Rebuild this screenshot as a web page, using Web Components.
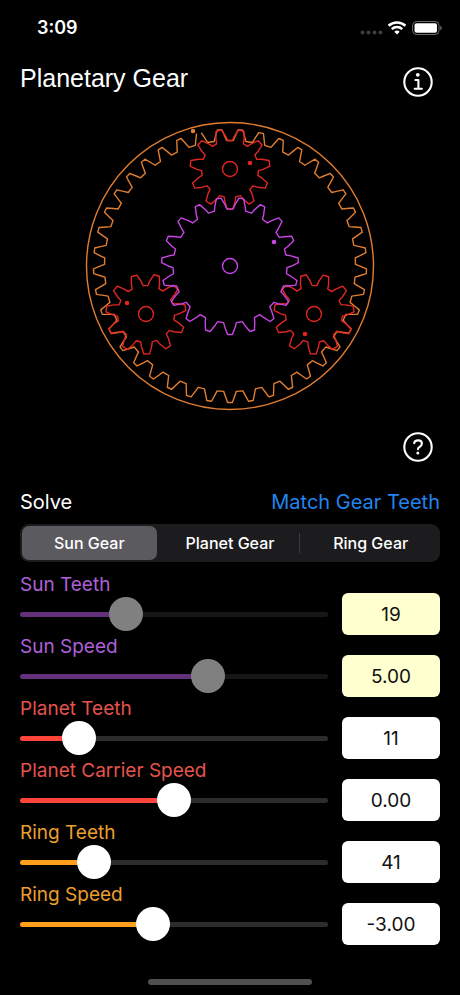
<!DOCTYPE html>
<html lang="en">
<head>
<meta charset="utf-8">
<meta name="viewport" content="width=device-width, initial-scale=1">
<title>Planetary Gear</title>
<style>
    body {
        margin: 0;
        background: #000;
        color: #fff;
        font-family: Inter, "Liberation Sans", sans-serif;
        font-size: 20px;
        line-height: 24px;
    }
</style>
</head>
<body>
<gear-app></gear-app>

<script>
/* Turns a piece of markup into a template that elements clone into their shadow root. */
const makeTemplate = (html) => {
    const template = document.createElement('template');
    template.innerHTML = html;
    return template;
};

class BaseElement extends HTMLElement {
    constructor() {
        super();
        this._shadowRoot = this.attachShadow({ mode: 'open' });
        this._shadowRoot.appendChild(this.constructor.template.content.cloneNode(true));
    }
}

/* Clock on the left; signal, wifi and battery on the right. */
class StatusBar extends BaseElement {
    static template = makeTemplate(`
        <style>
            :host {
                display: flex;
                align-items: center;
                justify-content: space-between;
                height: 56px;
                padding: 0 18px 0 37px;
            }

            time {
                font-size: 18px;
                font-weight: 600;
            }

            svg {
                display: block;
            }
        </style>
        <time>3:09</time>
        <svg width="82" height="16" viewBox="0 0 82 16" aria-hidden="true">
            <g fill="#3d3d3d">
                <circle cx="2.5" cy="12.5" r="2"/><circle cx="8.5" cy="12.5" r="2"/>
                <circle cx="14.5" cy="12.5" r="2"/><circle cx="20.5" cy="12.5" r="2"/>
            </g>
            <g fill="none" stroke="#fff" stroke-width="2.6">
                <path d="M28.6 5.8a12.2 12.2 0 0 1 16.8 0"/>
                <path d="M31.8 9.1a7.6 7.6 0 0 1 10.4 0"/>
            </g>
            <path d="M37 14.6l-2.7-2.8a4 4 0 0 1 5.4 0z" fill="#fff"/>
            <rect x="52.5" y="1.5" width="26.5" height="13" rx="4" fill="none" stroke="#6c6c6c"/>
            <rect x="54.5" y="3.3" width="22.5" height="9.4" rx="2" fill="#fff"/>
            <path d="M80.3 5.8c1.8.5 1.8 3.9 0 4.4z" fill="#777"/>
        </svg>
    `);
}

/* Round outlined button, the glyph is passed in through the slot. */
class CircleButton extends BaseElement {
    static template = makeTemplate(`
        <style>
            :host {
                display: block;
            }

            button {
                display: block;
                padding: 0;
                border: 0;
                background: none;
                color: inherit;
            }

            ::slotted(svg) {
                display: block;
                width: 30px;
                height: 30px;
            }
        </style>
        <button type="button"><slot></slot></button>
    `);

    connectedCallback() {
        this._shadowRoot.querySelector('button').setAttribute('aria-label', this.getAttribute('label'));
    }
}

/**
 * Builds the outline of a gear as a list of points.
 * Every tooth has a flat tip, a bowed flank and a flat root.
 * Angles are degrees, clockwise from the top.
 */
const gearPoints = ({ teeth, start, tip, mid, root }) => {
    const points = [];
    const pitch = 360 / teeth;
    const add = (radius, degrees) => {
        const a = degrees * Math.PI / 180;
        points.push(`${(radius * Math.sin(a)).toFixed(2)},${(-radius * Math.cos(a)).toFixed(2)}`);
    };

    for (let i = 0; i < teeth; i++) {
        const centre = start + i * pitch;
        // the first point sits after the tip, so an open outline lacks one tip only
        add(tip.r, centre + tip.half);
        add(mid.r, centre + mid.half);
        add(root.r, centre + root.half);
        add(root.r, centre + pitch - root.half);
        add(mid.r, centre + pitch - mid.half);
        add(tip.r, centre + pitch - tip.half);
    }
    return points.join(' ');
};

const SUN = { teeth: 19, start: 180 / 19, tip: { r: 68.5, half: 2 }, mid: { r: 61, half: 5 }, root: { r: 57, half: 6.4 } };
const RING = { teeth: 41, start: -540 / 41, tip: { r: 136.5, half: 1 }, mid: { r: 130, half: 2.1 }, root: { r: 125.5, half: 2.9 } };
const PLANET = { teeth: 11, start: 180 / 11, tip: { r: 40, half: 4.1 }, mid: { r: 33, half: 8.9 }, root: { r: 28.5, half: 11.6 } };

const PLANETS = [
    { x: 0, y: -97, turn: 0, dot: [20, -6] },
    { x: 84, y: 48, turn: 1, dot: [-9, 20] },
    { x: -84, y: 48, turn: -1, dot: [-19, -11] },
];

/* The drawing of the gear train: ring, sun and three planets. */
class GearTrain extends BaseElement {
    static template = makeTemplate(`
        <style>
            :host {
                display: block;
                width: 100%;
                max-width: 290px;
                --ring: #e07d30;
                --sun: #c845e4;
                --planet: #de2722;
            }

            svg {
                display: block;
                width: 100%;
                fill: none;
                stroke-width: 1.4;
                stroke-linejoin: round;
            }

            .ring { stroke: var(--ring); }
            .sun { stroke: var(--sun); }
            .planet { stroke: var(--planet); }
            .ring .dot { fill: var(--ring); }
            .sun .dot { fill: var(--sun); }
            .planet .dot { fill: var(--planet); }
        </style>
        <svg viewBox="-145 -145 290 290" role="img" aria-label="Planetary gear train"></svg>
    `);

    connectedCallback() {
        const planets = PLANETS.map(({ x, y, turn, dot }) => `
            <g class="planet" transform="translate(${x} ${y})">
                <polygon points="${gearPoints(PLANET)}" transform="rotate(${turn})"/>
                <circle r="7.5"/>
                <circle class="dot" cx="${dot[0]}" cy="${dot[1]}" r="1.6"/>
            </g>`).join('');

        this._shadowRoot.querySelector('svg').innerHTML = `
            <g class="ring">
                <circle r="143.5"/>
                <polyline points="${gearPoints(RING)}"/>
                <circle class="dot" cx="-37" cy="-135" r="1.6"/>
            </g>
            ${planets}
            <g class="sun">
                <polygon points="${gearPoints(SUN)}"/>
                <circle r="7.5"/>
                <circle class="dot" cx="44" cy="-24" r="1.6"/>
            </g>`;
    }
}

/* Picks which gear is solved for. */
class SegmentedControl extends BaseElement {
    static template = makeTemplate(`
        <style>
            :host {
                display: block;
            }

            fieldset {
                display: grid;
                grid-auto-columns: 1fr;
                grid-auto-flow: column;
                gap: 6px;
                min-width: 0;
                margin: 0;
                padding: 2px;
                border: 0;
                border-radius: 9px;
                background: #1c1c1f;
            }

            label {
                position: relative;
                border-radius: 7px;
                font-size: 16px;
                font-weight: 500;
                line-height: 34px;
                text-align: center;
            }

            label:has(input:checked) {
                background: #5b5a5f;
            }

            /* hairline between two segments that are both off */
            label:not(:has(input:checked)) + label::before {
                content: "";
                position: absolute;
                left: -4px;
                top: 7px;
                bottom: 7px;
                width: 1px;
                background: #3c3c40;
            }

            input {
                position: absolute;
                inset: 0;
                margin: 0;
                opacity: 0;
            }
        </style>
        <fieldset aria-label="Solve"></fieldset>
    `);

    connectedCallback() {
        const fieldset = this._shadowRoot.querySelector('fieldset');
        this.getAttribute('options').split(',').forEach((name, i) => {
            const label = document.createElement('label');
            const input = document.createElement('input');
            input.type = 'radio';
            input.name = 'solve';
            input.value = name;
            input.defaultChecked = i === 0;
            label.append(input, name);
            fieldset.appendChild(label);
        });
    }
}

/* One value of a gear: label, slider and number field. */
class GearSlider extends BaseElement {
    static template = makeTemplate(`
        <style>
            :host {
                display: grid;
                grid-template-columns: 1fr 98px;
                column-gap: 14px;
                font-size: 19px;
                --text: #eb9f2e;
                --fill: #ff9f1c;
                --rest: #2c2c2e;
                --thumb: #fff;
            }

            :host([gear="planet"]) {
                --text: #e5534d;
                --fill: #ff453a;
            }

            :host([gear="sun"]) {
                --text: #ad60d8;
                --fill: #63307c;
            }

            :host([solved]) {
                --rest: #161617;
                --thumb: #808080;
            }

            .control {
                display: flex;
                flex-direction: column;
                height: 62px;
            }

            label {
                color: var(--text);
            }

            input[type="range"] {
                appearance: none;
                width: 100%;
                height: 34px;
                margin: 0;
                background: none;
            }

            input[type="range"]::-webkit-slider-runnable-track {
                height: 5px;
                border-radius: 3px;
                background: linear-gradient(to right, var(--fill) var(--at), var(--rest) var(--at));
            }

            input[type="range"]::-webkit-slider-thumb {
                appearance: none;
                width: 34px;
                height: 34px;
                margin-top: -15px;
                border-radius: 50%;
                background: var(--thumb);
            }

            input[type="text"] {
                align-self: end;
                box-sizing: border-box;
                width: 100%;
                height: 42px;
                padding: 0;
                border: 0;
                border-radius: 6px;
                background: #fff;
                color: #111;
                font: inherit;
                text-align: center;
            }

            :host([solved]) input[type="text"] {
                background: #ffffcf;
            }
        </style>
        <div class="control">
            <label for="range"></label>
            <input type="range" id="range">
        </div>
        <input type="text" inputmode="decimal">
    `);

    connectedCallback() {
        this._label = this._shadowRoot.querySelector('label');
        this._range = this._shadowRoot.querySelector('[type="range"]');
        this._field = this._shadowRoot.querySelector('[type="text"]');

        this._label.textContent = this.getAttribute('label');
        this._field.setAttribute('aria-label', `${this.getAttribute('label')} value`);
        this._range.min = this.getAttribute('min');
        this._range.max = this.getAttribute('max');
        this._range.step = this.hasAttribute('decimals') ? 0.01 : 1;
        this._range.value = this.getAttribute('value');
        this._range.disabled = this.hasAttribute('solved');
        this._field.readOnly = this.hasAttribute('solved');

        this._range.addEventListener('input', () => this.render());
        this._field.addEventListener('change', () => {
            this._range.value = this._field.value;
            this.render();
        });
        this.render();
    }

    render() {
        const { min, max, value } = this._range;
        const at = (value - min) / (max - min) * 100;
        this._range.style.setProperty('--at', `${at}%`);
        this._field.value = Number(value).toFixed(Number(this.getAttribute('decimals') || 0));
    }
}

class GearApp extends BaseElement {
    static template = makeTemplate(`
        <style>
            :host {
                display: flex;
                flex-direction: column;
                min-height: 100vh;
            }

            header,
            .help {
                display: flex;
                justify-content: space-between;
                padding: 0 27px 0 20px;
            }

            header {
                padding-top: 11px;
            }

            h1 {
                margin: 0;
                font-family: "Liberation Sans", sans-serif;
                font-size: 25px;
                font-weight: 400;
                line-height: 22px;
            }

            gear-train {
                margin: 24px auto 21px;
            }

            .help {
                justify-content: flex-end;
            }

            main {
                padding: 28px 20px 0;
            }

            .solve {
                display: flex;
                justify-content: space-between;
                margin-bottom: 10px;
            }

            h2 {
                margin: 0;
                font: inherit;
            }

            .match {
                padding: 0;
                border: 0;
                background: none;
                color: #2384ee;
                font: inherit;
            }

            .sliders {
                margin-top: 11px;
            }

            .home {
                width: 164px;
                height: 6px;
                margin: auto auto 10px;
                border-radius: 3px;
                background: #505050;
            }
        </style>
        <status-bar></status-bar>
        <header>
            <h1>Planetary Gear</h1>
            <circle-button label="Info">
                <svg viewBox="0 0 30 30" fill="none" stroke="#fff" stroke-width="2.1" stroke-linecap="round" stroke-linejoin="round">
                    <circle cx="15" cy="15" r="13.7"/>
                    <circle cx="14.8" cy="7.8" r="1.9" fill="#fff" stroke="none"/>
                    <path d="M12.4 13h3v8.7M11.7 21.8h7.2"/>
                </svg>
            </circle-button>
        </header>
        <gear-train></gear-train>
        <div class="help">
            <circle-button label="Help">
                <svg viewBox="0 0 30 30" fill="none" stroke="#fff" stroke-width="2.1" stroke-linecap="round" stroke-linejoin="round">
                    <circle cx="15" cy="15" r="13.7"/>
                    <path d="M11.2 11.2C11.4 9.4 12.9 8.4 15 8.4c2.3 0 3.9 1.2 3.9 3.2 0 1.6-.9 2.4-2.2 3.2-1.3.8-1.8 1.3-1.8 2.5"/>
                    <circle cx="14.8" cy="21" r="1.5" fill="#fff" stroke="none"/>
                </svg>
            </circle-button>
        </div>
        <main>
            <div class="solve">
                <h2>Solve</h2>
                <button class="match" type="button">Match Gear Teeth</button>
            </div>
            <segmented-control options="Sun Gear,Planet Gear,Ring Gear"></segmented-control>
            <div class="sliders">
                <gear-slider gear="sun" label="Sun Teeth" min="4" max="50" value="19" solved></gear-slider>
                <gear-slider gear="sun" label="Sun Speed" min="-20" max="20" value="5" decimals="2" solved></gear-slider>
                <gear-slider gear="planet" label="Planet Teeth" min="4" max="50" value="11"></gear-slider>
                <gear-slider gear="planet" label="Planet Carrier Speed" min="-20" max="20" value="0" decimals="2"></gear-slider>
                <gear-slider gear="ring" label="Ring Teeth" min="28" max="90" value="41"></gear-slider>
                <gear-slider gear="ring" label="Ring Speed" min="-20" max="20" value="-3" decimals="2"></gear-slider>
            </div>
        </main>
        <div class="home"></div>
    `);
}

customElements.define('status-bar', StatusBar);
customElements.define('circle-button', CircleButton);
customElements.define('gear-train', GearTrain);
customElements.define('segmented-control', SegmentedControl);
customElements.define('gear-slider', GearSlider);
customElements.define('gear-app', GearApp);
</script>
</body>
</html>
